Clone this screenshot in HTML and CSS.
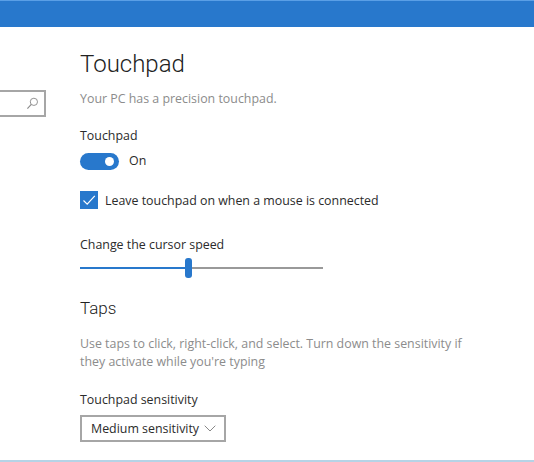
FILE: index.html
```html
<!DOCTYPE html>
<html lang="en">
<head>
<meta charset="utf-8">
<title>Touchpad</title>
<link rel="stylesheet" href="styles.css">
</head>
<body>
<header class="titlebar"></header>
<div class="window">
  <aside class="sidebar">
    <div class="search">
      <svg class="search-icon" viewBox="0 0 14 14" width="13" height="13" aria-hidden="true">
        <circle cx="8.5" cy="5.2" r="3.9" fill="none" stroke="#8a8a8a" stroke-width="1"/>
        <path d="M5.7 8L1.5 12.5" fill="none" stroke="#8a8a8a" stroke-width="1.2"/>
      </svg>
    </div>
  </aside>
  <main class="content">
    <h1 class="title">Touchpad</h1>
    <p class="muted intro">Your PC has a precision touchpad.</p>
    <div class="label label-touchpad">Touchpad</div>
    <div class="toggle-row">
      <span class="toggle"><span class="knob"></span></span>
      <span class="label">On</span>
    </div>
    <div class="check-row">
      <span class="check">
        <svg viewBox="0 0 18 18" width="18" height="18" aria-hidden="true"><path d="M3.5 9.5L7.2 13.2L14.8 4.8" fill="none" stroke="#fff" stroke-width="1.2"/></svg>
      </span>
      <span class="label">Leave touchpad on when a mouse is connected</span>
    </div>
    <div class="label label-speed">Change the cursor speed</div>
    <div class="slider">
      <span class="track-on"></span>
      <span class="thumb"></span>
      <span class="track-off"></span>
    </div>
    <h2 class="subtitle">Taps</h2>
    <p class="muted desc">Use taps to click, right-click, and select. Turn down the sensitivity if they activate while you're typing</p>
    <div class="label label-sens">Touchpad sensitivity</div>
    <div class="select">
      <span class="label">Medium sensitivity</span>
      <svg viewBox="0 0 12 7" width="12" height="7" aria-hidden="true"><path d="M0.7 0.7L6 6L11.3 0.7" fill="none" stroke="#888" stroke-width="1"/></svg>
    </div>
  </main>
</div>
</body>
</html>
```

FILE: styles.css
```css
* { box-sizing: border-box; }
html, body { margin: 0; padding: 0; }
body {
  width: 534px;
  height: 462px;
  overflow: hidden;
  background: #fff;
  font-family: "Open Sans", "Noto Sans", sans-serif;
  color: #262626;
  border-bottom: 2px solid #b5d3e6;
}
.titlebar {
  height: 27px;
  background: #2878cc;
  border-top: 1px solid #5a9fe6;
}
.window { display: flex; }
.sidebar { width: 46px; flex: none; padding-top: 63px; }
.search {
  width: 46px;
  height: 27px;
  border: 2px solid #a6a6a6;
  border-left: 0;
  display: flex;
  align-items: center;
  justify-content: flex-end;
  padding-right: 5px;
}
.content { padding-left: 34px; width: 420px; }
.title {
  margin: 21px 0 0;
  font-family: Roboto, "Open Sans", sans-serif;
  font-size: 24px;
  line-height: 32px;
  font-weight: 300;
  color: #222;
}
.muted { margin: 0; font-size: 12.4px; color: #8c8c8c; }
.intro { margin-top: 10px; line-height: 18px; }
.label { font-size: 12.4px; line-height: 18px; color: #2b2b2b; }
.label-touchpad { margin-top: 19px; }
.toggle-row { display: flex; align-items: center; gap: 10px; margin-top: 7px; }
.toggle {
  width: 39px;
  height: 17px;
  border-radius: 9px;
  background: #2878cc;
  display: flex;
  align-items: center;
  justify-content: flex-end;
  padding-right: 5px;
}
.knob { width: 9px; height: 9px; border-radius: 50%; background: #fff; }
.check-row { display: flex; align-items: center; gap: 7px; margin-top: 21px; }
.check { width: 18px; height: 18px; background: #2878cc; display: block; }
.check svg { display: block; }
.check-row .label { position: relative; top: 1px; }
.label-speed { margin-top: 27px; }
.slider { display: flex; align-items: center; width: 243px; height: 20px; margin-top: 4px; }
.track-on { width: 105px; height: 2px; background: #2878cc; }
.thumb { width: 7px; height: 20px; border-radius: 3px; background: #2878cc; }
.track-off { flex: 1; height: 2px; background: #999; }
.subtitle {
  margin: 18px 0 0;
  font-family: Roboto, "Open Sans", sans-serif;
  font-size: 17px;
  line-height: 24px;
  font-weight: 300;
  color: #222;
}
.muted.desc { margin-top: 15px; line-height: 18px; width: 400px; }
.label-sens { margin-top: 20px; }
.select {
  display: flex;
  align-items: center;
  justify-content: space-between;
  width: 146px;
  height: 27px;
  margin-top: 6px;
  padding: 0 8px 0 9px;
  border: 2px solid #a6a6a6;
}
```
